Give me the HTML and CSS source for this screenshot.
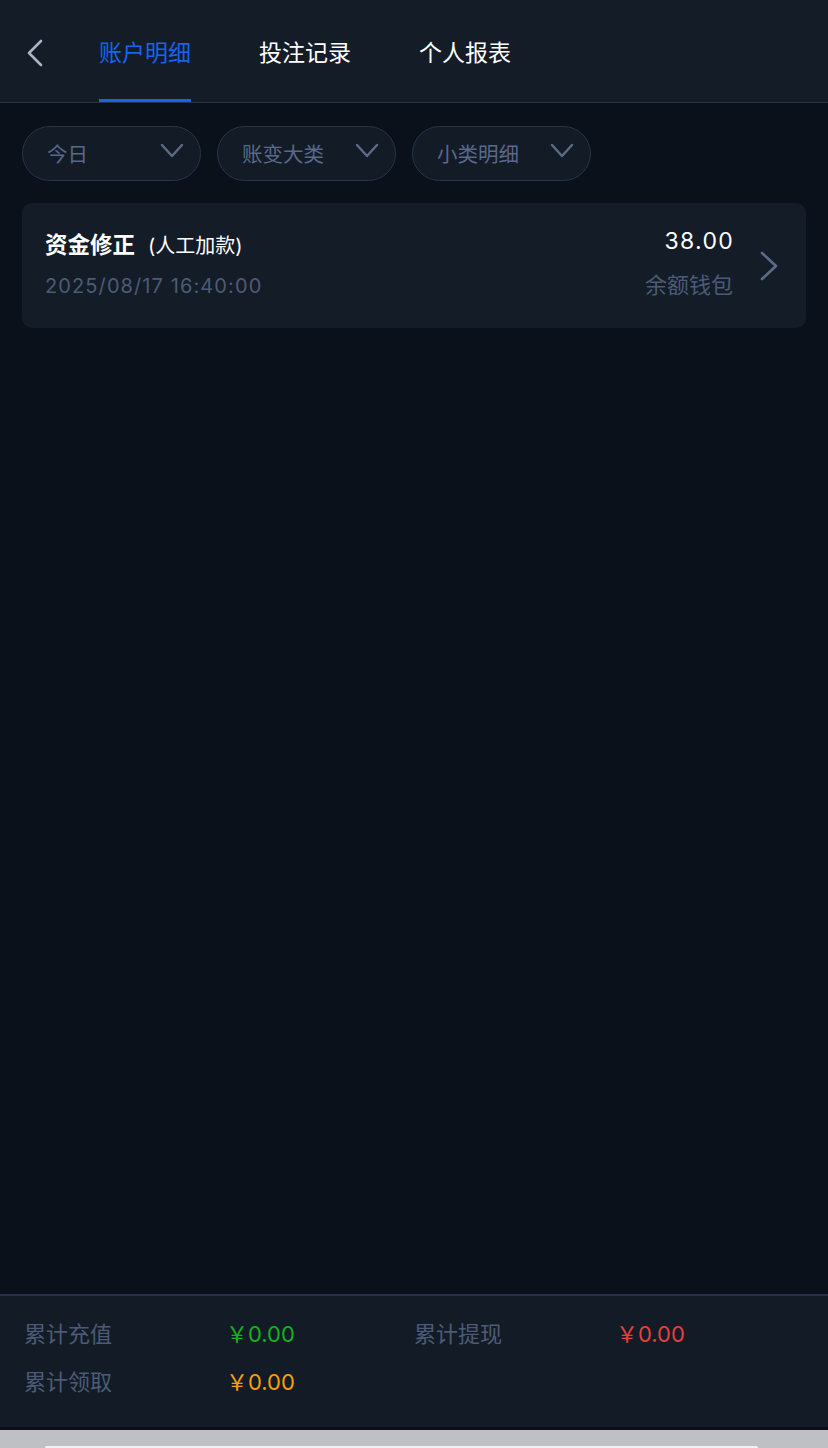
FILE: index.html
```html
<!DOCTYPE html>
<html lang="zh-CN">
    <head>
        <meta charset="UTF-8">
        <meta name="viewport" content="width=device-width, initial-scale=1.0">
        <title>账户明细</title>
        <link rel="stylesheet" href="styles.css">
    </head>
    <body>
        <div class="page">
            <header class="topbar">
                <a class="back" href="#">
                    <svg width="18" height="28" viewBox="0 0 18 28">
                        <path d="M15 2 L3 14 L15 26" fill="none" stroke="#aab4c2" stroke-width="2.6" stroke-linecap="round" stroke-linejoin="round"/>
                    </svg>
                </a>
                <nav class="tabs">
                    <a class="tab active" href="#">账户明细</a>
                    <a class="tab" href="#">投注记录</a>
                    <a class="tab" href="#">个人报表</a>
                </nav>
            </header>

            <main class="content">
                <div class="filters">
                    <div class="pill">
                        <span>今日</span>
                        <svg class="caret" width="24" height="16" viewBox="0 0 24 16"><path d="M2 2 L12 13 L22 2" fill="none" stroke="#5b6c86" stroke-width="2.4" stroke-linecap="round" stroke-linejoin="round"/></svg>
                    </div>
                    <div class="pill">
                        <span>账变大类</span>
                        <svg class="caret" width="24" height="16" viewBox="0 0 24 16"><path d="M2 2 L12 13 L22 2" fill="none" stroke="#5b6c86" stroke-width="2.4" stroke-linecap="round" stroke-linejoin="round"/></svg>
                    </div>
                    <div class="pill">
                        <span>小类明细</span>
                        <svg class="caret" width="24" height="16" viewBox="0 0 24 16"><path d="M2 2 L12 13 L22 2" fill="none" stroke="#5b6c86" stroke-width="2.4" stroke-linecap="round" stroke-linejoin="round"/></svg>
                    </div>
                </div>

                <div class="record">
                    <div class="rec-left">
                        <div class="rec-title">资金修正<span class="rec-sub">(人工加款)</span></div>
                        <div class="rec-time">2025/08/17 16:40:00</div>
                    </div>
                    <div class="rec-right">
                        <div class="rec-amount">38.00</div>
                        <div class="rec-wallet">余额钱包</div>
                    </div>
                    <svg class="rec-arrow" width="20" height="30" viewBox="0 0 20 30">
                        <path d="M3 2 L17 15 L3 28" fill="none" stroke="#5b6c86" stroke-width="2.6" stroke-linecap="round" stroke-linejoin="round"/>
                    </svg>
                </div>
            </main>

            <footer class="summary">
                <div class="sum-item">
                    <span class="sum-label">累计充值</span>
                    <span class="sum-val green">￥0.00</span>
                </div>
                <div class="sum-item">
                    <span class="sum-label">累计提现</span>
                    <span class="sum-val red">￥0.00</span>
                </div>
                <div class="sum-item">
                    <span class="sum-label">累计领取</span>
                    <span class="sum-val orange">￥0.00</span>
                </div>
            </footer>
            <div class="homebar"><div class="homebar-pill"></div></div>
        </div>
    </body>
</html>
```

FILE: styles.css
```css
*{
    box-sizing: border-box;
}
body{
    margin: 0;
    background: #0b111b;
    font-family: "Inter", "Noto Sans CJK SC", sans-serif;
    color: #fff;
}
a{
    text-decoration: none;
    color: inherit;
}
.page{
    min-height: 100vh;
    display: flex;
    flex-direction: column;
}

/* top bar */
.topbar{
    height: 103px;
    background: #141c28;
    border-bottom: 1px solid #27324a;
    display: flex;
    align-items: stretch;
    padding-left: 26px;
}
.back{
    display: flex;
    align-items: center;
    padding-top: 3px;
    width: 73px;
}
.tabs{
    display: flex;
    gap: 68px;
}
.tab{
    display: flex;
    align-items: center;
    padding-top: 3px;
    font-size: 23px;
    color: #fff;
    border-bottom: 3px solid transparent;
}
.tab.active{
    color: #1464ee;
    border-bottom-color: #1464ee;
}

/* content */
.content{
    flex: 1;
    padding: 23px 22px;
}
.filters{
    display: flex;
    gap: 16px;
}
.pill{
    width: 179px;
    height: 55px;
    border: 1.5px solid #273449;
    border-radius: 28px;
    background: #131b27;
    display: flex;
    align-items: center;
    justify-content: space-between;
    padding: 0 16px 2px 24px;
    font-size: 20.5px;
    color: #58698a;
}
.caret{
    margin-top: -3px;
}
.record{
    margin-top: 22px;
    height: 125px;
    background: #141c28;
    border-radius: 10px;
    display: flex;
    align-items: center;
    padding: 0 27px 0 23px;
}
.rec-left{
    flex: 1;
}
.rec-title{
    font-size: 22.5px;
    font-weight: 700;
    line-height: 30px;
}
.rec-sub{
    font-size: 20px;
    font-weight: 400;
    margin-left: 13px;
}
.rec-time, .rec-wallet{
    margin-top: 10px;
    font-size: 20px;
    line-height: 30px;
    color: #4b5b76;
}
.rec-time{
    letter-spacing: 1.1px;
}
.rec-right{
    text-align: right;
}
.rec-amount{
    font-size: 23px;
    line-height: 30px;
    margin-top: -5px;
    letter-spacing: 1.3px;
    margin-right: -1px;
}
.rec-wallet{
    margin-top: 14px;
    font-size: 22px;
}
.rec-arrow{
    margin-left: 26px;
}

/* summary */
.summary{
    background: #131b27;
    border-top: 2px solid #263246;
    border-bottom: 3px solid #0a0e15;
    padding: 23px 24px 30px;
    display: grid;
    grid-template-columns: 1fr 1fr;
    row-gap: 18px;
}
.sum-item{
    display: flex;
    line-height: 30px;
    font-size: 22px;
}
.sum-label{
    width: 205px;
    color: #4b5b76;
}
.sum-val{
    margin-left: -3px;
}
.green{ color: #13b21a; }
.red{ color: #e5403a; }
.orange{ color: #f39f0d; }

.homebar{
    height: 18px;
    background: #bfc0c3;
    display: flex;
    align-items: flex-end;
    padding: 0 70px 0 45px;
}
.homebar-pill{
    flex: 1;
    height: 2px;
    background: #f2f2f2;
    border-radius: 6px 6px 0 0;
}
```
